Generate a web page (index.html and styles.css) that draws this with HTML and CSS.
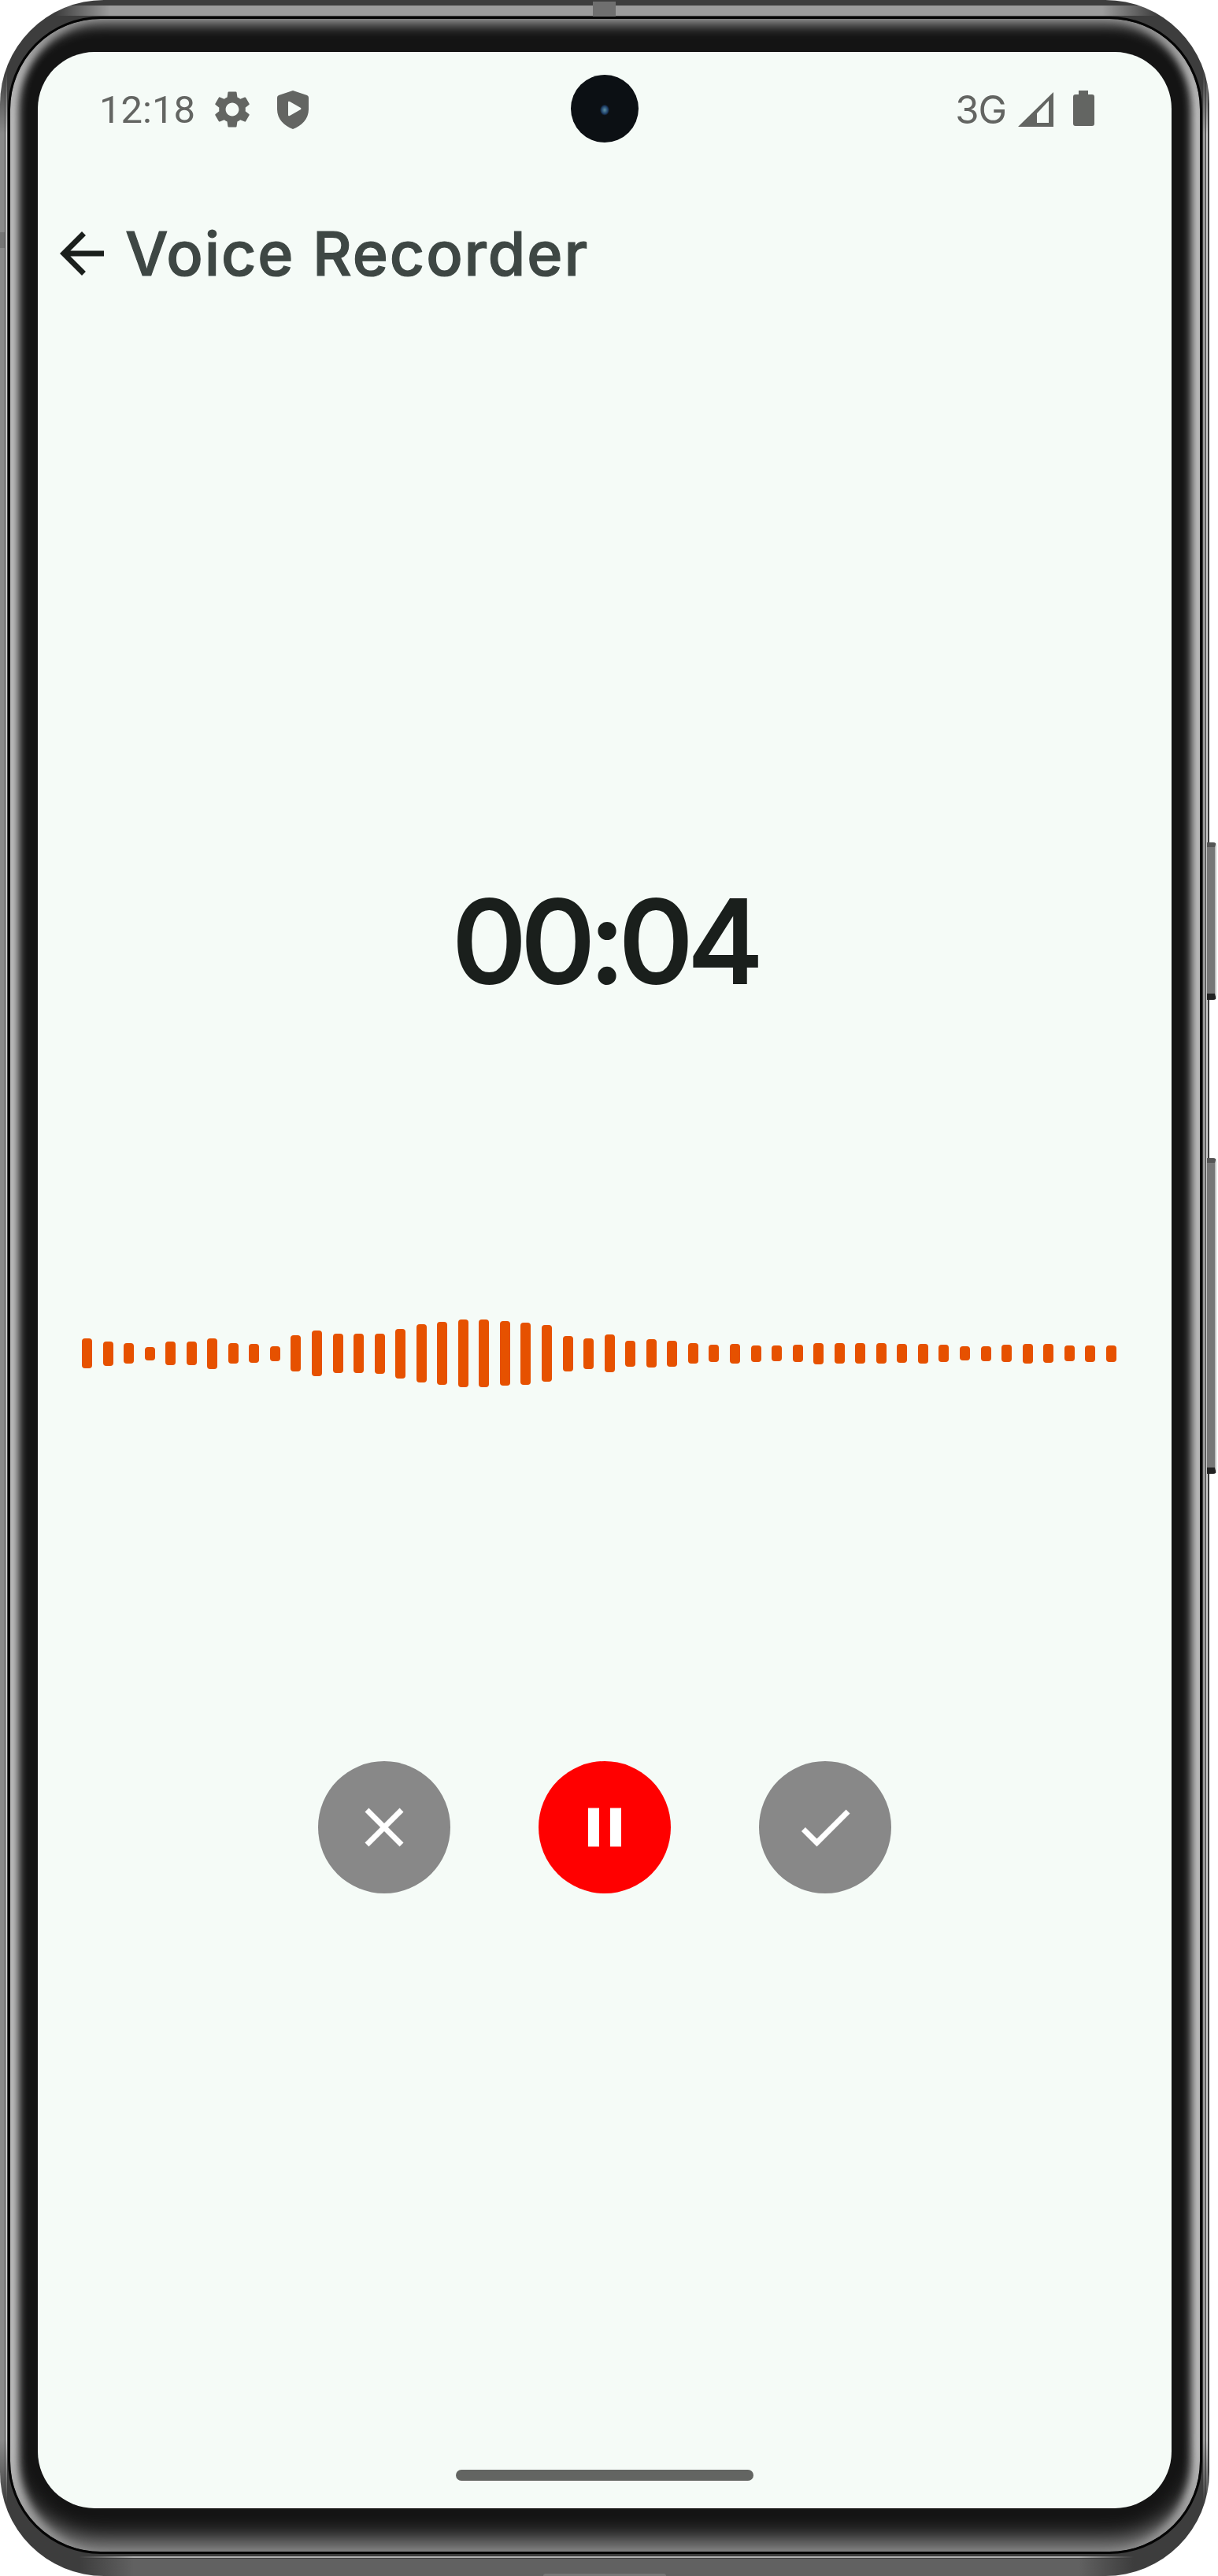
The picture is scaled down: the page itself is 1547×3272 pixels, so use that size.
FILE: index.html
```html
<!DOCTYPE html>
<html lang="en">
<head>
    <meta charset="UTF-8">
    <title>Voice Recorder</title>
    <link rel="stylesheet" href="styles.css">
</head>
<body>

<div class="phone">
    <div class="top-mark"></div>
    <div class="bottom-mark"></div>
    <div class="left-mark"></div>
    <div class="side-btn power"></div>
    <div class="side-btn volume"></div>

    <div class="bezel">
        <div class="screen">
            <div class="camera"></div>

            <div class="status-bar">
                <div class="status-left">
                    <span class="clock">12:18</span>
                    <svg class="gear" viewBox="0 0 24 24"><path d="M19.14 12.94c.04-.3.06-.61.06-.94 0-.32-.02-.64-.07-.94l2.03-1.58c.18-.14.23-.41.12-.61l-1.92-3.32c-.12-.22-.37-.29-.59-.22l-2.39.96c-.5-.38-1.03-.7-1.62-.94l-.36-2.54c-.04-.24-.24-.41-.48-.41h-3.84c-.24 0-.43.17-.47.41l-.36 2.54c-.59.24-1.13.57-1.62.94l-2.39-.96c-.22-.08-.47 0-.59.22L2.74 8.87c-.12.21-.08.47.12.61l2.03 1.58c-.05.3-.09.63-.09.94s.02.64.07.94l-2.03 1.58c-.18.14-.23.41-.12.61l1.92 3.32c.12.22.37.29.59.22l2.39-.96c.5.38 1.03.7 1.62.94l.36 2.54c.05.24.24.41.48.41h3.84c.24 0 .44-.17.47-.41l.36-2.54c.59-.24 1.13-.56 1.62-.94l2.39.96c.22.08.47 0 .59-.22l1.92-3.32c.12-.22.07-.47-.12-.61l-2.01-1.58zM12 15.6c-1.98 0-3.6-1.62-3.6-3.6s1.62-3.6 3.6-3.6 3.6 1.62 3.6 3.6-1.62 3.6-3.6 3.6z"/></svg>
                    <svg class="shield" viewBox="0 0 40 49"><path fill-rule="evenodd" d="M20 0L38 6Q40 7 40 9V24C40 36 31 45 20 49C9 45 0 36 0 24V9Q0 7 2 6ZM14 15V31Q14 33 16 32L30 24Q31 23 30 22L16 14Q14 13 14 15Z"/></svg>
                </div>
                <div class="status-right">
                    <span class="network">3G</span>
                    <svg class="signal" viewBox="0 0 45 44"><path fill-rule="evenodd" d="M45 0V44H0ZM39 11L24 27V39H39Z"/></svg>
                    <svg class="battery" viewBox="0 0 27 45"><path d="M7 0H19V5H24Q27 5 27 8V42Q27 45 24 45H3Q0 45 0 42V8Q0 5 3 5H7Z"/></svg>
                </div>
            </div>

            <div class="app-bar">
                <svg class="back" viewBox="0 0 24 24"><path d="M20 11H7.83l5.59-5.59L12 4l-8 8 8 8 1.41-1.41L7.83 13H20v-2z"/></svg>
                <h1 class="title">Voice Recorder</h1>
            </div>

            <div class="timer">00:04</div>

            <div class="wave">
                <span style="height:38px"></span><span style="height:31px"></span><span style="height:26px"></span><span style="height:17px"></span><span style="height:30px"></span>
                <span style="height:30px"></span><span style="height:39px"></span><span style="height:26px"></span><span style="height:24px"></span><span style="height:19px"></span>
                <span style="height:46px"></span><span style="height:58px"></span><span style="height:50px"></span><span style="height:50px"></span><span style="height:51px"></span>
                <span style="height:63px"></span><span style="height:74px"></span><span style="height:80px"></span><span style="height:86px"></span><span style="height:86px"></span>
                <span style="height:82px"></span><span style="height:79px"></span><span style="height:72px"></span><span style="height:45px"></span><span style="height:39px"></span>
                <span style="height:48px"></span><span style="height:33px"></span><span style="height:36px"></span><span style="height:33px"></span><span style="height:26px"></span>
                <span style="height:22px"></span><span style="height:25px"></span><span style="height:21px"></span><span style="height:20px"></span><span style="height:22px"></span>
                <span style="height:27px"></span><span style="height:26px"></span><span style="height:26px"></span><span style="height:26px"></span><span style="height:24px"></span>
                <span style="height:25px"></span><span style="height:22px"></span><span style="height:18px"></span><span style="height:19px"></span><span style="height:22px"></span>
                <span style="height:25px"></span><span style="height:24px"></span><span style="height:20px"></span><span style="height:21px"></span><span style="height:21px"></span>
            </div>

            <div class="controls">
                <button class="round-btn grey">
                    <svg viewBox="0 0 24 24"><path d="M19 6.41L17.59 5 12 10.59 6.41 5 5 6.41 10.59 12 5 17.59 6.41 19 12 13.41 17.59 19 19 17.59 13.41 12z"/></svg>
                </button>
                <button class="round-btn red">
                    <svg viewBox="0 0 24 24"><path d="M6 19h4V5H6v14zm8-14v14h4V5h-4z"/></svg>
                </button>
                <button class="round-btn grey">
                    <svg viewBox="0 0 24 24"><path d="M9 16.17L4.83 12l-1.42 1.41L9 19 21 7l-1.41-1.41z"/></svg>
                </button>
            </div>

            <div class="home-bar"></div>
        </div>
    </div>
</div>

</body>
</html>
```

FILE: styles.css
```css
body {
    margin: 0;
    background-color: white;
    font-family: Inter, sans-serif;
}

/* phone frame */
.phone {
    position: relative;
    box-sizing: border-box;
    width: 1536px;
    height: 3272px;
    padding: 21px 9px 28px 10px;
    border-radius: 132px;
    background-color: #3d3d3d;
    background-image:
        linear-gradient(to right, transparent 70px, #9c9c9c 140px, #9c9c9c 1400px, transparent 1470px),
        linear-gradient(to right, transparent 100px, #616161 170px, #616161 1370px, transparent 1440px),
        linear-gradient(to right, transparent 100px, #b0b0b0 170px, #b0b0b0 1370px, transparent 1440px),
        linear-gradient(to bottom, transparent 90px, #8a8a8a 170px, #8a8a8a 3100px, transparent 3180px),
        linear-gradient(to bottom, transparent 90px, #cccccc 170px, #cccccc 3100px, transparent 3180px),
        linear-gradient(to bottom, transparent 90px, #9a9a9a 170px, #9a9a9a 3100px, transparent 3180px),
        linear-gradient(to bottom, transparent 90px, #cccccc 170px, #cccccc 3100px, transparent 3180px);
    background-size: 100% 13px, 100% 22px, 100% 2px, 6px 100%, 2px 100%, 3px 100%, 2px 100%;
    background-position: 0 7px, 0 3250px, 0 3247px, 0 0, 7px 0, 1528px 0, 1532px 0;
    background-repeat: no-repeat;
}
.top-mark {
    position: absolute;
    top: 2px;
    left: 753px;
    width: 29px;
    height: 19px;
    background-color: #6f6f6f;
}
.bottom-mark {
    position: absolute;
    left: 690px;
    bottom: 0;
    width: 156px;
    height: 3px;
    background-color: #777;
    border-radius: 3px 3px 0 0;
}
.left-mark {
    position: absolute;
    left: 0;
    top: 295px;
    width: 6px;
    height: 20px;
    background-color: #747474;
}
.side-btn {
    position: absolute;
    left: 1533px;
    width: 12px;
    border-radius: 0 4px 4px 0;
    background-color: #777;
    border-right: 2px solid #c4c4c4;
    border-top: 6px solid #555;
    border-bottom: 8px solid #222;
    box-sizing: border-box;
}
.power {
    top: 1070px;
    height: 200px;
}
.volume {
    top: 1471px;
    height: 401px;
}
.bezel {
    box-sizing: border-box;
    width: 1517px;
    height: 3223px;
    padding: 42px 36px 55px 35px;
    border: 3px solid #050505;
    border-radius: 118px;
    background-color: #141414;
    box-shadow:
        inset 0 14px 16px -6px #8c8c8c,
        inset 0 -24px 28px -8px #8a8a8a,
        inset 16px 0 12px -6px #dddddd,
        inset -16px 0 12px -6px #dddddd;
}

/* screen */
.screen {
    position: relative;
    display: flex;
    flex-direction: column;
    width: 1440px;
    height: 3120px;
    border-radius: 72px;
    background-color: #f5fbf7;
    overflow: hidden;
}
.camera {
    position: absolute;
    top: 29px;
    left: 677px;
    width: 86px;
    height: 86px;
    border-radius: 50%;
    background: radial-gradient(ellipse 6px 7px at 50% 52%, #5e93a6 0, #1d3d66 70%, #0c1014 100%),
        radial-gradient(circle at 50% 50%, #0f1214 0, #0f1214 26px, #050505 32px);
}

.status-bar {
    display: flex;
    justify-content: space-between;
    align-items: center;
    flex: none;
    height: 146px;
    padding: 0 98px 0 78px;
    color: #636562;
    fill: #636562;
}
.status-left, .status-right {
    display: flex;
    align-items: center;
}
.clock {
    font-family: Roboto, sans-serif;
    font-size: 49px;
}
.gear {
    width: 56px;
    height: 56px;
    margin-left: 19px;
}
.shield {
    width: 40px;
    height: 49px;
    margin-left: 29px;
}
.network {
    font-size: 49px;
    letter-spacing: -1px;
}
.signal {
    width: 45px;
    height: 44px;
    margin-left: 15px;
}
.battery {
    width: 27px;
    height: 45px;
    margin-left: 25px;
    margin-bottom: 3px;
}

.app-bar {
    display: flex;
    align-items: center;
    flex: none;
    height: 220px;
    padding-left: 14px;
}
.back {
    width: 84px;
    height: 84px;
    fill: #1a1f1c;
}
.title {
    margin: 0 0 0 13px;
    font-size: 77px;
    font-weight: 500;
    letter-spacing: 1.9px;
    -webkit-text-stroke: 1.2px #3e4744;
    color: #3e4744;
}

.timer {
    flex: none;
    margin-top: 684px;
    height: 160px;
    line-height: 160px;
    text-align: center;
    font-size: 147px;
    font-weight: 500;
    letter-spacing: -7.5px;
    -webkit-text-stroke: 2px #1a1f1c;
    color: #1a1f1c;
}

.wave {
    display: flex;
    align-items: center;
    gap: 13.56px;
    flex: none;
    margin-top: 398px;
    height: 90px;
    padding-left: 56px;
}
.wave span {
    flex: none;
    width: 13px;
    border-radius: 4px;
    background-color: #e65100;
}

.controls {
    display: flex;
    justify-content: center;
    gap: 112px;
    flex: none;
    margin-top: 473px;
}
.round-btn {
    display: flex;
    align-items: center;
    justify-content: center;
    width: 168px;
    height: 168px;
    padding: 0;
    border: none;
    border-radius: 50%;
}
.round-btn svg {
    width: 84px;
    height: 84px;
    fill: white;
}
.grey {
    background-color: #888888;
}
.red {
    background-color: #ff0000;
}

.home-bar {
    flex: none;
    align-self: center;
    width: 378px;
    height: 14px;
    margin-top: 732px;
    border-radius: 7px;
    background-color: #636562;
}
```
